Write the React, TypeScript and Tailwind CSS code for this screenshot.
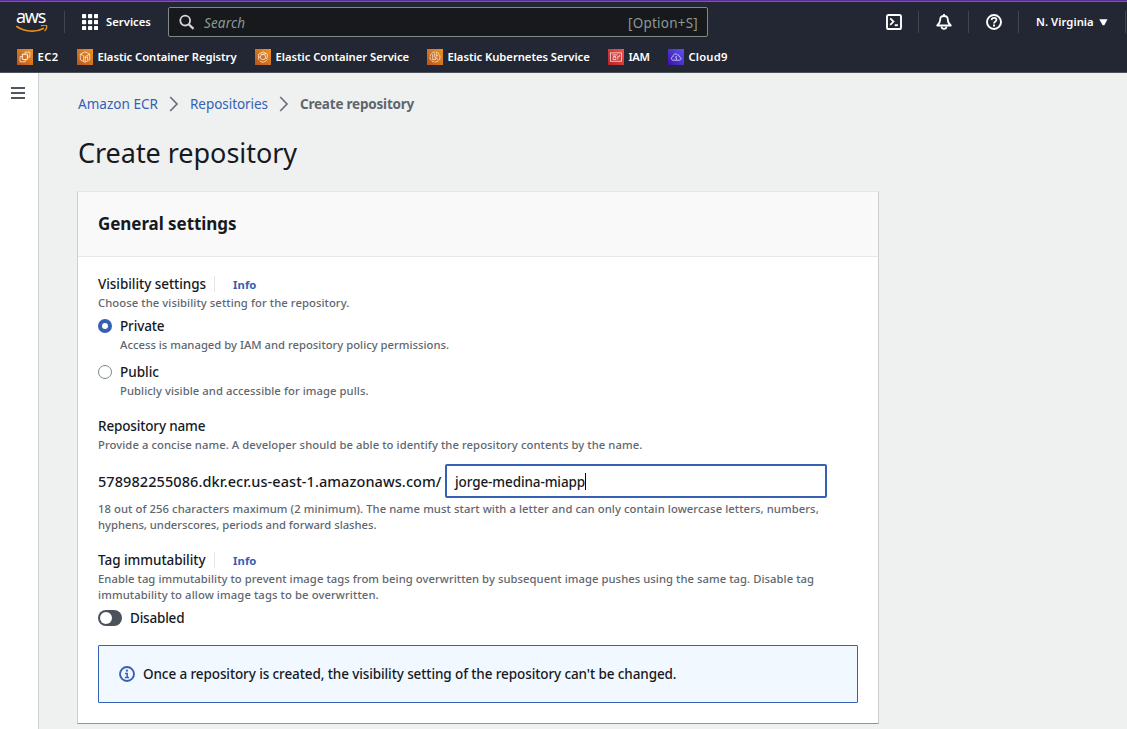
import React, { type ReactNode } from "react";

const LogoSmile = () => (
  <svg width="32" height="9" viewBox="0 0 32 9" fill="none" className="block">
    <path d="M0.3 1.2C8 6.8 19.500 7.800 28 3.200" stroke="#e8921c" strokeWidth="1.600" />
    <path d="M25 0.900C27 0.200 29.500 0 30.500 0.700C31 1.800 30.200 4.400 28.600 6" stroke="#e8921c" strokeWidth="1.400" />
  </svg>
);

const AppsGrid = () => (
  <svg width="16" height="16" viewBox="0 0 16 16" fill="#fff" className="block">
    {[0, 6, 12].map((y) => [0, 6, 12].map((x) => <rect key={`${x}-${y}`} x={x} y={y} width="4.200" height="4.200" rx="0.800" />))}
  </svg>
);

const Ec2 = () => (
  <g>
    <path d="M5.800 7.600H3v5.200h5.200v-2.300" />
    <rect x="5.300" y="5.300" width="5.200" height="5.200" rx="0.900" strokeWidth="1.100" />
    <path d="M8 5V3.200h4.900v4.900h-2.100" />
    <path d="M6.700 4.600v.7M8.900 10.500v1" />
  </g>
);
const Ecr = () => (
  <g>
    <path d="M8 2.800l4.700 2.300v5.600L8 13.300l-4.700-2.600V5.100z" />
    <path d="M3.500 5.200l3.200 1.700v5.400M8.200 12.900V7.600l4.300-2.300M8.200 8.800l2.400-1v3.600" />
  </g>
);
const Ecs = () => (
  <g>
    <circle cx="8" cy="8" r="2.700" />
    <path d="M3.600 10.800V5.200L8 2.800l4.300 2.300v3.900M4.800 12L8 13.400l3.800-1.900M5.700 4.900L8 5.300l2.900-.9M3.600 8h1.700M10.700 8.500l1.800 2.300" />
  </g>
);
const Eks = () => (
  <g>
    <circle cx="8" cy="8" r="5" strokeDasharray="3.300 0.700" />
    <path d="M5.700 5.200v5.600M7.700 4.300v4M9.600 4.500v3L11.200 6M8.500 8.400l2.700 2.400M6 10.600h2.500V8.400" />
  </g>
);
const Iam = () => (
  <g>
    <rect x="2.500" y="3.900" width="11" height="8.300" />
    <path d="M4.300 5.900h5.200M5 8.100h2.900v2.400H5zM5.600 8V7.200h1.700V8M9.800 10.500V7.400h1.700V6" />
  </g>
);
const Cloud9 = () => (
  <g>
    <path d="M5 11.200h6.300c2 0 2.300-2.800.4-3.200C11.500 5.900 9.800 6 9.500 6.100 8.400 4 4.900 4.700 5.100 7.600 2.700 8 2.800 11 5 11.200z" />
    <path d="M7 8.600l1.800-1.300M8.300 10.800V8.300" />
  </g>
);

type Service = { name: string; glyph: ReactNode; tile: string; text: string; box: string };

const SERVICES: Service[] = [
  { name: "EC2", glyph: <Ec2 />, tile: "from-[#b8541c] to-[#ee9426]", text: "tracking-[0.35px]", box: "w-[60px]" },
  { name: "Elastic Container Registry", glyph: <Ecr />, tile: "from-[#b8541c] to-[#ee9426]", text: "tracking-[-0.05px]", box: "w-[178px]" },
  { name: "Elastic Container Service", glyph: <Ecs />, tile: "from-[#b8541c] to-[#ee9426]", text: "tracking-[-0.03px]", box: "w-[172px]" },
  { name: "Elastic Kubernetes Service", glyph: <Eks />, tile: "from-[#b8541c] to-[#ee9426]", text: "tracking-[-0.05px]", box: "w-[181px]" },
  { name: "IAM", glyph: <Iam />, tile: "from-[#b32428] to-[#f0544e]", text: "tracking-[-0.4px]", box: "w-[60px]" },
  { name: "Cloud9", glyph: <Cloud9 />, tile: "from-[#3d0ba8] to-[#5a54f4]", text: "tracking-[0.18px]", box: "w-[80px]" },
];

const TopIcon = ({ children }: { children: ReactNode }) => (
  <div className="flex h-[22px] w-[50px] items-center justify-center border-r border-[#3f4552]">
    <svg width="18" height="18" viewBox="0 0 18 18" fill="none" stroke="#fff" strokeWidth="1.900" className="block">
      {children}
    </svg>
  </div>
);

const Header = () => (
  <header className="flex h-[73px] flex-col border-b border-[#4b505b] bg-[#232734] text-[11.25px] font-semibold text-white">
    <div className="h-[2px] border-b border-[#7d4fc0] bg-[#5f2d9b]" />
    <div className="flex h-10 items-center">
      <div className="flex h-[22px] w-[65px] items-start border-r border-[#3f4552] pl-4">
        <div className="flex flex-col">
          <span className="mt-[-4px] text-[18px] leading-[18px] font-normal tracking-[-1.3px]">aws</span>
          <LogoSmile />
        </div>
      </div>
      <div className="flex w-[103px] items-center gap-2 pl-[17px]">
        <AppsGrid />
        <span className="tracking-[0.02px]">Services</span>
      </div>
      <div className="flex h-[30px] w-[540px] items-center rounded-[2px] border border-[#7f8986] bg-[#17191c] px-[9px] text-[13.5px] font-normal text-[#8b9896]">
        <svg width="17" height="17" viewBox="0 0 17 17" fill="none" stroke="#d3d8d8" strokeWidth="1.800" className="mr-[9px] block">
          <circle cx="7.200" cy="6.600" r="4.900" />
          <path d="M10.700 10.200l4.800 4.700" strokeWidth="2.200" />
        </svg>
        <span className="flex-1 pt-[2px] tracking-[0.15px] italic">Search</span>
        <span className="pt-[2px] tracking-[0.23px]">[Option+S]</span>
      </div>
      <div className="flex flex-1 items-center pl-[161px]">
        <TopIcon>
          <rect x="2" y="2" width="14" height="14" rx="1.600" />
          <path d="M5.200 5.400l3.300 3.200-3.300 3.200" strokeWidth="1.700" />
          <path d="M9.700 12.200h3.200" />
        </TopIcon>
        <TopIcon>
          <path d="M2.200 12.500h13.600c-2-1.700-3-3.300-3-5.800C12.800 3.700 11.200 3 9 3S5.200 3.700 5.200 6.700c0 2.500-1 4.100-3 5.800z" strokeLinejoin="round" strokeWidth="1.800" />
          <path d="M9 1v2M6.500 13.500c.4 3.200 4.600 3.200 5 0" strokeWidth="1.800" />
        </TopIcon>
        <TopIcon>
          <circle cx="9" cy="9" r="7" />
          <path d="M6.600 7.100c.1-3 4.900-3 4.900 0C11.500 8.600 9 8.500 9 10.600" strokeWidth="1.700" />
          <path d="M9 11.600v1.900" strokeWidth="1.900" />
        </TopIcon>
        <div className="flex h-[22px] w-[107px] items-center gap-[5px] border-r border-[#3f4552] pl-[17px] whitespace-nowrap">
          <span className="tracking-[0.05px]">N. Virginia</span>
          <svg width="9" height="7" viewBox="0 0 9 7" fill="#fff" className="block">
            <path d="M0.300 0.200h8.200L5.300 6.300H3.600z" />
          </svg>
        </div>
      </div>
    </div>
    <nav className="flex h-[30px] items-center pl-[17px]">
      {SERVICES.map((s) => (
        <div key={s.name} className={`flex shrink-0 items-center gap-[4.500px] whitespace-nowrap ${s.box}`}>
          <span className={`h-4 w-4 bg-linear-to-tr ${s.tile}`}>
            <svg width="16" height="16" viewBox="0 0 16 16" fill="none" stroke="#ffffff" strokeOpacity="0.850" strokeWidth="0.800" className="block">
              {s.glyph}
            </svg>
          </span>
          <span className={s.text}>{s.name}</span>
        </div>
      ))}
    </nav>
  </header>
);

const Label = ({ children, className = "" }: { children: ReactNode; className?: string }) => (
  <div className={`h-5 text-[13.5px] leading-5 font-medium text-[#16191f] ${className}`}>{children}</div>
);

const Hint = ({ children, className = "" }: { children: ReactNode; className?: string }) => (
  <div className={`h-4 text-[11.25px] leading-4 font-medium text-[#5f6770] ${className}`}>{children}</div>
);

const InfoLink = () => (
  <a className="ml-2 flex h-4 items-center border-l border-[#e2e5e5] pt-[2px] pl-[18px] text-[11.25px] font-bold tracking-[0.1px] text-[#3560b4]">
    Info
  </a>
);

const Chevron = () => (
  <svg width="10" height="16" viewBox="0 0 10 16" fill="none" stroke="#687078" strokeWidth="1.700" className="block">
    <path d="M1.200 1l6.800 7-6.800 7" />
  </svg>
);

export default function App() {
  return (
    <div className="flex h-[729px] w-[1127px] flex-col overflow-hidden bg-[#eff1f1] font-['Noto_Sans',sans-serif] whitespace-nowrap">
      <Header />
      <div className="flex flex-1">
        <aside className="w-[39px] border-r border-[#cfd2d2] bg-white pt-[14px] pl-[11px]">
          <svg width="14" height="12" viewBox="0 0 14 12" fill="#50565f" className="block">
            <path d="M0 0h14v2H0zM0 5h14v2H0zM0 10h14v2H0z" />
          </svg>
        </aside>
        <main className="flex flex-1 flex-col pl-[38px]">
          <div className="mt-[21px] flex h-5 items-center pl-px text-[13.5px] text-[#3560b4]">
            <span className="w-[91px] tracking-[0.03px]">Amazon ECR</span>
            <Chevron />
            <span className="w-[88px] pl-[11px] tracking-[-0.05px]">Repositories</span>
            <span className="pl-3">
              <Chevron />
            </span>
            <span className="pl-[11px] text-[13.5px] font-bold tracking-[-0.21px] text-[#5f656d]">Create repository</span>
          </div>
          <h1 className="mt-[21px] h-9 pl-px text-[27px] leading-9 tracking-[-0.04px] text-[#16191f]">Create repository</h1>
          <section className="mt-[20px] flex h-[533px] w-[802px] flex-col border border-t-[#e6e8e8] border-r-[#cbcfcf] border-b-[#8f9696] border-l-[#cbcfcf] bg-white">
            <h2 className="flex h-[65px] items-center border-b border-[#e6e9e9] bg-[#f9f9f9] pl-5 text-[17px] font-bold tracking-[-0.06px] text-[#16191f]">
              General settings
            </h2>
            <div className="flex flex-col pt-[17px] pl-[20px]">
              <div className="flex items-center">
                <Label className="w-[108px] tracking-[-0.05px]">Visibility settings</Label>
                <InfoLink />
              </div>
              <Hint className="mt-px tracking-[0.07px]">Choose the visibility setting for the repository.</Hint>
              <div className="mt-[5px] flex items-center gap-2">
                <span className="flex h-[14px] w-[14px] items-center justify-center rounded-full bg-[#3560b4]">
                  <span className="h-[6px] w-[6px] rounded-full bg-white" />
                </span>
                <Label className="tracking-[-0.14px]">Private</Label>
              </div>
              <Hint className="mt-px pl-[22px] tracking-[0.01px]">Access is managed by IAM and repository policy permissions.</Hint>
              <div className="mt-[9px] flex items-center gap-2">
                <span className="h-[14px] w-[14px] rounded-full border border-[#7e8987]" />
                <Label className="tracking-[-0.02px]">Public</Label>
              </div>
              <Hint className="mt-px pl-[22px] tracking-[0.06px]">Publicly visible and accessible for image pulls.</Hint>
              <Label className="mt-[17px] tracking-[-0.15px]">Repository name</Label>
              <Hint className="mt-px tracking-[0.07px]">Provide a concise name. A developer should be able to identify the repository contents by the name.</Hint>
              <div className="mt-[11px] flex h-[34px] items-center">
                <span className="w-[347px] text-[14.5px] leading-5 font-medium tracking-[0.08px] text-[#16191f]">
                  578982255086.dkr.ecr.us-east-1.amazonaws.com/
                </span>
                <div className="flex h-[34px] w-[382px] items-center rounded-[2px] border-2 border-[#3560b4] bg-white pl-2">
                  <Label className="mt-[2px] w-[130px] tracking-[-0.1px]">jorge-medina-miapp</Label>
                  <span className="h-[17px] w-px bg-black" />
                </div>
              </div>
              <Hint className="mt-[3px] tracking-[0.08px]">
                18 out of 256 characters maximum (2 minimum). The name must start with a letter and can only contain lowercase letters, numbers,
              </Hint>
              <Hint className="tracking-[-0.02px]">hyphens, underscores, periods and forward slashes.</Hint>
              <div className="mt-[17px] flex items-center">
                <Label className="w-[108px] tracking-[-0.05px]">Tag immutability</Label>
                <InfoLink />
              </div>
              <Hint className="mt-px tracking-[0.053px]">
                Enable tag immutability to prevent image tags from being overwritten by subsequent image pushes using the same tag. Disable tag
              </Hint>
              <Hint className="tracking-[0.1px]">immutability to allow image tags to be overwritten.</Hint>
              <div className="mt-[5px] flex items-center gap-2">
                <span className="flex h-4 w-6 items-center rounded-full bg-[#4b515c] pl-[2px]">
                  <span className="h-3 w-3 rounded-full bg-white" />
                </span>
                <Label className="tracking-[-0.2px]">Disabled</Label>
              </div>
              <div className="mt-[17px] flex h-[58px] w-[760px] items-center gap-2 rounded-[1px] border border-[#3560b4] bg-[#f1f8ff] pl-5">
                <svg width="16" height="16" viewBox="0 0 16 16" fill="none" stroke="#3560b4" strokeWidth="1.900" className="block">
                  <circle cx="8" cy="8" r="7" />
                  <path d="M7.900 3.600v2" strokeWidth="2" />
                  <path d="M6 7.500h2.200v4M5.900 11.500h4.200" strokeWidth="1.500" />
                </svg>
                <Label className="tracking-[-0.1px]">Once a repository is created, the visibility setting of the repository can't be changed.</Label>
              </div>
            </div>
          </section>
        </main>
      </div>
    </div>
  );
}
